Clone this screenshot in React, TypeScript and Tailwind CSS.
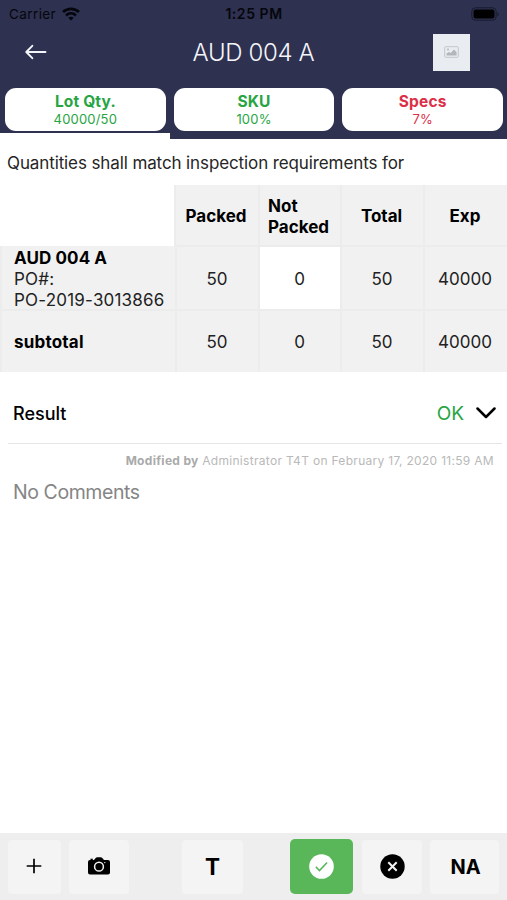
const tabs = [
  { title: 'Lot Qty.', value: '40000/50', color: 'text-[#27a543]' },
  { title: 'SKU', value: '100%', color: 'text-[#27a543]' },
  { title: 'Specs', value: '7%', color: 'text-[#dc3048]' },
];

function StatusBar() {
  return (
    <div className="grid h-[27px] grid-cols-3 items-center pl-[9px] pr-[7px] text-[13px] text-[#05060c]">
      <div className="flex items-center gap-[6px]">
        <span className="pt-px text-[13.500px] tracking-[0.4px]">Carrier</span>
        <svg width="18" height="14" viewBox="0 0 18 14" fill="none" stroke="currentColor" strokeWidth="2.700">
          <path d="M1 5.100c4.500-4.200 11.500-4.200 16 0" />
          <path d="M4 8.400c2.900-2.600 7.100-2.600 10 0" />
          <path d="M6.300 10.700c1.600-1.300 3.800-1.300 5.400 0L9 13.400z" fill="currentColor" stroke="none" />
        </svg>
      </div>
      <span className="pr-px text-center text-[14px] font-semibold tracking-[0.55px]">1:25 PM</span>
      <svg className="justify-self-end" width="29" height="14" viewBox="0 0 29 14">
        <rect x="0.800" y="0.800" width="24.400" height="12.400" rx="3.500" fill="none" stroke="#191b2e" strokeWidth="1" />
        <rect x="2.500" y="2.500" width="21" height="9" rx="2" fill="#000" />
        <path d="M26.500 5v4.500c1.700-.7 1.700-3.800 0-4.500z" fill="#191b2e" />
      </svg>
    </div>
  );
}

function Header() {
  return (
    <header className="h-[139px] bg-[#2e3150]">
      <StatusBar />
      <div className="grid h-[50px] grid-cols-[100px_1fr_100px] items-center">
        <svg className="ml-[25px]" width="22" height="16" viewBox="0 0 22 16" fill="none" stroke="#f4f5fb" strokeWidth="1.900" strokeLinecap="round" strokeLinejoin="round">
          <path d="M20.500 8H1.500M7.300 1.800 1.300 8l6 6.200" />
        </svg>
        <h1 className="pt-[2px] text-center text-[24px] leading-[30px] font-light tracking-[-0.35px] text-[#f4f5fb]">AUD 004 A</h1>
        <div className="ml-[26px] flex size-[37px] items-center justify-center bg-[#e9edf1]">
          <svg width="15" height="12" viewBox="0 0 15 12">
            <rect x="0.700" y="0.700" width="13.600" height="10.600" rx="1" fill="none" stroke="#c3c6c9" strokeWidth="1" />
            <path d="M2.500 9.500V7.500L5 6l1.700 1L10 3.500l2.600 2.700v3.300z" fill="#b4b7ba" />
            <circle cx="4" cy="3.400" r="1" fill="#b4b7ba" />
          </svg>
        </div>
      </div>
      <div className="mt-[11px] flex gap-2 pl-[5px] pr-1">
        {tabs.map((t) => (
          <button key={t.title} className={`flex h-[43px] flex-1 flex-col items-center rounded-[11px] bg-white pt-[5px] ${t.color}`}>
            <span className="text-[15.500px] leading-[18px] font-bold tracking-[0.15px]">{t.title}</span>
            <span className="text-[13px] leading-[17px] tracking-[0.2px]">{t.value}</span>
          </button>
        ))}
      </div>
      <div className="mt-[2px] h-[6px] w-[170px] bg-white" />
    </header>
  );
}

const cell = 'flex items-center justify-center border-r-2 border-b-2 border-[#ececec] bg-[#f1f1f1]';

function QuantityTable() {
  return (
    <div className="grid grid-cols-[177px_83px_82px_83px_82px] grid-rows-[62px_64px_61px] text-[17px] leading-[21px] text-[#222]">
      <div className="mr-[3px] bg-white" />
      <div className={`${cell} -ml-[3px] border-l-2 pt-[2px] pr-[2px] font-bold text-black`}>Packed</div>
      <div className={`${cell} pt-[3px] pr-[2px] font-bold text-black`}><span className="w-[62px]">Not Packed</span></div>
      <div className={`${cell} pt-[2px] pr-[2px] font-bold text-black`}>Total</div>
      <div className="flex items-center justify-center border-b-2 border-[#ececec] bg-[#f1f1f1] pt-[2px] pr-[2px] font-bold text-black">Exp</div>

      <div className={`${cell} -mt-px border-l-2 pt-[4px] pl-[12px]`}>
        <div className="w-full">
          <div className="font-bold tracking-[0.1px] text-black">AUD 004 A</div>
          <div className="tracking-[0.2px]">PO#:</div>
          <div className="tracking-[0.2px] whitespace-nowrap">PO-2019-3013866</div>
        </div>
      </div>
      <div className={`${cell} pt-[2px] pr-px`}>50</div>
      <div className="flex items-center justify-center border-r-2 border-b-2 border-[#ececec] bg-white pt-[2px] pr-px">0</div>
      <div className={`${cell} pt-[2px] pr-px`}>50</div>
      <div className="flex items-center justify-center border-b-2 border-[#ececec] bg-[#f1f1f1] pt-[2px] pr-[2px]">40000</div>

      <div className="flex items-center border-r-2 border-l-2 border-[#ececec] bg-[#f1f1f1] pt-px pl-[12px] font-bold tracking-[0.2px] text-black">subtotal</div>
      {['50', '0', '50'].map((value, i) => (
        <div key={i} className="flex items-center justify-center border-r-2 border-[#ececec] bg-[#f1f1f1] pt-px pr-px">{value}</div>
      ))}
      <div className="flex items-center justify-center bg-[#f1f1f1] pt-px pr-[2px]">40000</div>
    </div>
  );
}

function Toolbar() {
  const button = 'flex h-[54px] items-center justify-center rounded-[4px] bg-[#f4f4f4] text-black';
  return (
    <footer className="flex h-[67px] items-center bg-[#eeeeee] pl-2">
      <button className={`${button} w-[53px] pr-px pb-px`} aria-label="Add">
        <svg width="16" height="16" viewBox="0 0 16 16" stroke="currentColor" strokeWidth="1.700">
          <path d="M8 .7v14.600M.7 8h14.600" />
        </svg>
      </button>
      <button className={`${button} ml-2 w-[60px] pb-px`} aria-label="Take photo">
        <svg width="24" height="18" viewBox="0 0 24 18">
          <path d="M3 3h4l1.700-2Q9.300.3 10.200.3h3.600q.9 0 1.500.7L17 3h4q2 0 2 2v10.500q0 2-2 2H3q-2 0-2-2V5q0-2 2-2z" fill="#000" />
          <path d="M3.500 1.700h2.300V3H3.500z" fill="#000" />
          <circle cx="12" cy="9.700" r="4.400" fill="none" stroke="#f4f4f4" strokeWidth="1.500" />
          <circle cx="17.800" cy="5.600" r=".7" fill="#f4f4f4" />
        </svg>
      </button>
      <button className={`${button} ml-[53px] w-[61px] text-[22.500px] font-bold`}>T</button>
      <button className="ml-[47px] flex h-[55px] w-[63px] items-center justify-center rounded-[5px] bg-[#59b75a]" aria-label="Pass">
        <svg width="25" height="25" viewBox="0 0 25 25" fill="none">
          <circle cx="12.500" cy="12.500" r="12.300" fill="#fff" />
          <path d="m6.800 12.800 3.700 3.700 7.600-8" stroke="#59b75a" strokeWidth="1.600" />
        </svg>
      </button>
      <button className={`${button} ml-[9px] w-[60px]`} aria-label="Fail">
        <svg width="25" height="25" viewBox="0 0 25 25">
          <circle cx="12.500" cy="12.500" r="12.200" fill="#000" />
          <path d="m8.300 8.300 8.400 8.400m0-8.400-8.400 8.400" stroke="#f4f4f4" strokeWidth="2" />
        </svg>
      </button>
      <button className={`${button} ml-2 w-[69px] pl-[2px] text-[20px] font-bold`}>NA</button>
    </footer>
  );
}

export default function App() {
  return (
    <div className="flex h-[900px] w-[507px] flex-col overflow-hidden bg-white font-[Inter,'Liberation_Sans',sans-serif]">
      <Header />
      <main className="flex-1">
        <p className="h-[46px] pt-[12px] pl-[7px] text-[17px] leading-6 tracking-[-0.11px] text-[#252525]">Quantities shall match inspection requirements for</p>
        <QuantityTable />
        <section>
          <div className="mr-[5px] ml-2 flex h-[72px] items-center border-b border-[#e5e5e5] pt-[11px] pl-[5px] text-[18px]">
            <span className="font-medium text-black">Result</span>
            <span className="ml-auto pt-[2px] text-[19px] text-[#27a543]">OK</span>
            <svg className="mr-[6px] ml-[12px]" width="20" height="13" viewBox="0 0 20 13" fill="none" stroke="#000" strokeWidth="2.500" strokeLinecap="round" strokeLinejoin="round">
              <path d="m1.500 1.500 8.500 8.500 8.500-8.500" />
            </svg>
          </div>
          <p className="mt-[8px] pr-[13px] text-right text-[12px] leading-[18px] tracking-[0.3px] text-[#b9b9b9]">
            <strong className="font-bold text-[#aaa]">Modified by</strong> Administrator T4T on February 17, 2020 11:59 AM
          </p>
          <p className="mt-[9px] pl-[13px] text-[19.500px] leading-[26px] tracking-[-0.43px] text-[#858585]">No Comments</p>
        </section>
      </main>
      <Toolbar />
    </div>
  );
}
